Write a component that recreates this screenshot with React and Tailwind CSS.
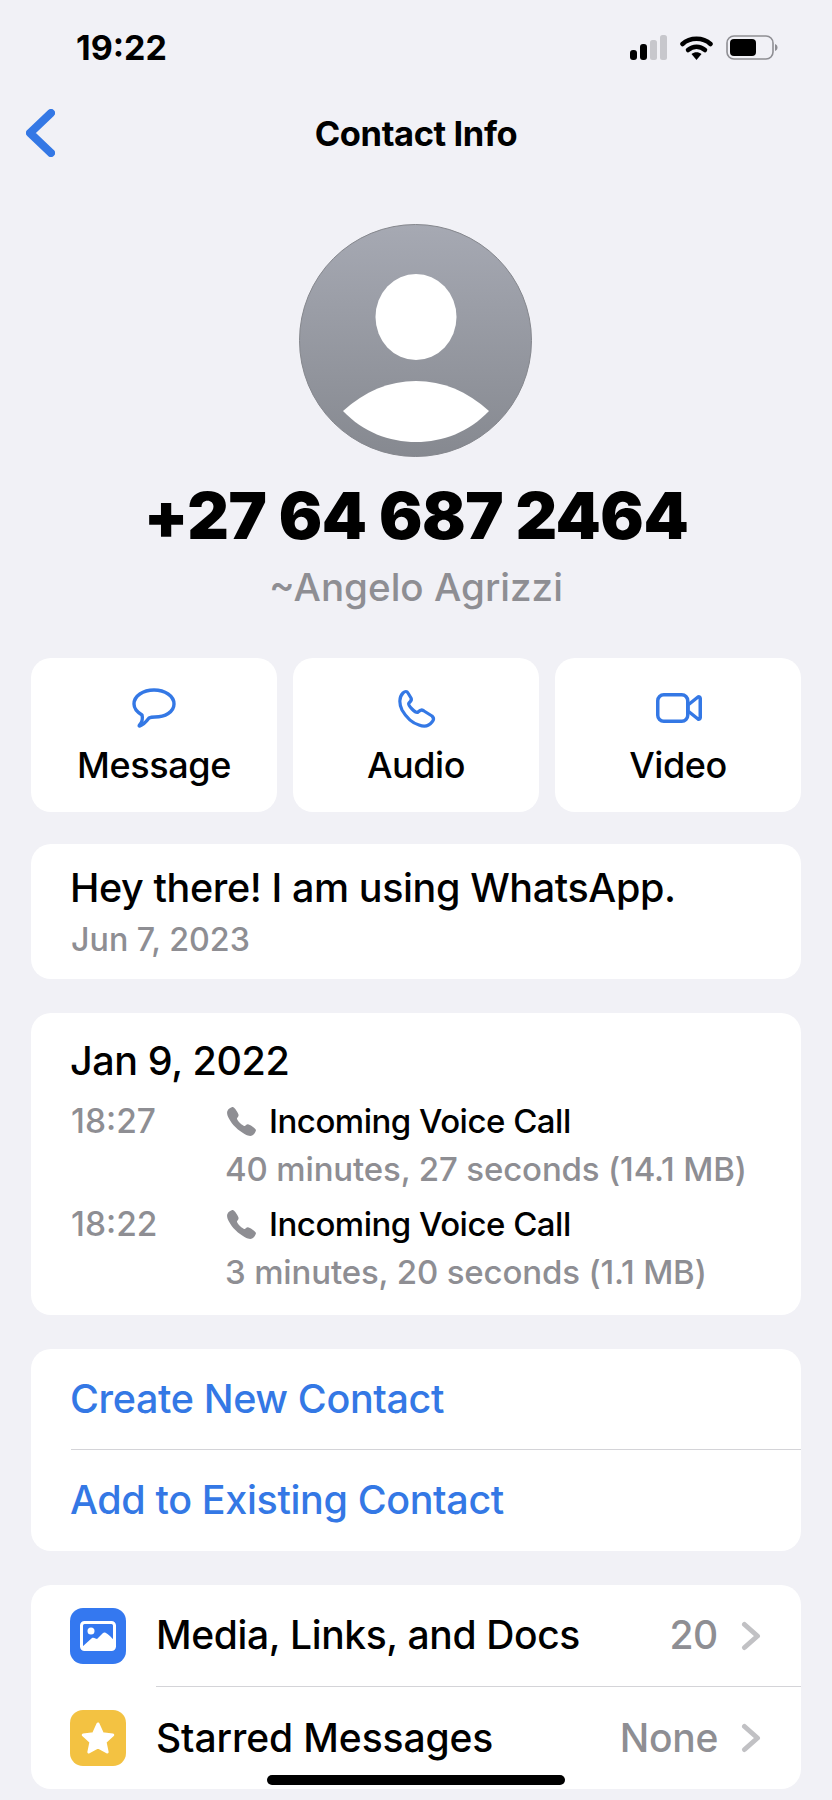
import { IoCall } from "react-icons/io5";

function Chevron() {
    return (
        <svg width="20" height="30" viewBox="0 0 20 30" fill="none" stroke="#c1c1c4" strokeWidth="5" strokeLinecap="round" strokeLinejoin="round">
            <path d="M3.5 3.5 L16.5 15 L3.5 26.5" />
        </svg>
    );
}

function StatusBar() {
    return (
        <div className="h-[94px] flex items-center justify-between pl-[76px] pr-[54px]">
            <span className="text-[34px] font-bold text-black">19:22</span>
            <div className="flex items-center gap-[13px]">
                <svg width="37" height="25" viewBox="0 0 37 25">
                    <rect x="0" y="15" width="7" height="10" rx="3" fill="#000" />
                    <rect x="10" y="9" width="7" height="16" rx="3" fill="#000" />
                    <rect x="20" y="5" width="7" height="20" rx="2.5" fill="#c7c7cc" />
                    <rect x="30" y="0" width="7" height="25" rx="2.5" fill="#c7c7cc" />
                </svg>
                <svg width="33" height="25" viewBox="0 0 33 25">
                    <path d="M2.5 9 C10 2 23 2 30.5 9" fill="none" stroke="#000" strokeWidth="4.5" strokeLinecap="round" />
                    <path d="M8 15 C13 10.5 20 10.5 25 15" fill="none" stroke="#000" strokeWidth="4.5" strokeLinecap="round" />
                    <path d="M11.5 19 C14.5 16.5 18.5 16.5 21.5 19 L16.5 25 Z" fill="#000" />
                </svg>
                <svg width="52" height="25" viewBox="0 0 52 25">
                    <rect x="1" y="1" width="46" height="23" rx="7" fill="none" stroke="#8e8e93" strokeWidth="1.6" />
                    <rect x="4" y="4" width="26" height="17" rx="4" fill="#000" />
                    <path d="M49 9 C51 10 51.5 11 51.5 12.5 C51.5 14 51 15 49 16 Z" fill="#8e8e93" />
                </svg>
            </div>
        </div>
    );
}

function ActionButton({ icon, label }) {
    return (
        <div className="flex-1 h-[154px] bg-white rounded-[20px] flex flex-col items-center">
            <div className="h-[44px] mt-[28px] flex items-center justify-center text-[#3478e5]">{icon}</div>
            <span className="mt-[15px] text-[36px] leading-[40px] font-medium text-black tracking-[-0.4px]">{label}</span>
        </div>
    );
}

function CallRow({ time, duration, className }) {
    return (
        <div className={`flex ${className || ""}`}>
            <span className="w-[154px] text-[33.5px] leading-[40px] text-[#8e8e93] font-[450]">{time}</span>
            <div>
                <div className="flex items-center h-[40px]">
                    <IoCall size={33} className="text-[#8e8e93] mr-[11px]" />
                    <span className="text-[33px] font-medium leading-[40px] text-black tracking-[-0.5px] whitespace-nowrap">Incoming Voice Call</span>
                </div>
                <div className="mt-[8px] text-[33px] leading-[40px] text-[#8e8e93] font-[450] tracking-[-0.15px] whitespace-nowrap">{duration}</div>
            </div>
        </div>
    );
}

function App() {
    return (
        <div
            className="relative w-[832px] h-[1800px] overflow-hidden bg-[#f1f1f6]"
            style={{ fontFamily: "Inter, 'Liberation Sans', sans-serif" }}
        >
            <StatusBar />

            <div className="relative h-[80px] flex items-center justify-center">
                <svg width="29" height="48" viewBox="0 0 29 48" fill="none" stroke="#3478e5" strokeWidth="8" strokeLinecap="round" strokeLinejoin="round" className="absolute left-[26px] top-[15px]">
                    <path d="M25 4 L4 24 L25 44" />
                </svg>
                <span className="text-[34.5px] font-bold tracking-[-0.4px] text-black">Contact Info</span>
            </div>

            <div className="flex flex-col items-center">
                <svg width="233" height="233" viewBox="0 0 233 233" className="mt-[50px] ml-[-1px]">
                    <defs>
                        <linearGradient id="avatarFill" x1="0" y1="0" x2="0" y2="1">
                            <stop offset="0" stopColor="#a6a9b3" />
                            <stop offset="1" stopColor="#868990" />
                        </linearGradient>
                    </defs>
                    <circle cx="116.5" cy="116.5" r="116" fill="url(#avatarFill)" stroke="#85878d" strokeWidth="1" />
                    <ellipse cx="117" cy="93" rx="40.5" ry="43" fill="#fff" />
                    <path d="M44 187 C66 167 90 157 117 157 C144 157 168 167 190 187 C170 208 144 218 117 218 C90 218 64 208 44 187 Z" fill="#fff" />
                </svg>
                <div className="mt-[23px] text-[64.5px] leading-[72px] font-black text-black tracking-[-0.5px] whitespace-nowrap">+27 64 687 2464</div>
                <div className="mt-[12px] text-[38.6px] leading-[46px] font-[450] text-[#8e8e93]">~Angelo Agrizzi</div>
            </div>

            <div className="flex flex-col px-[31px] mt-[48px]">
                <div className="flex gap-[16px]">
                    <ActionButton
                        label="Message"
                        icon={
                            <svg width="48" height="44" viewBox="6 6 48 44" fill="none" stroke="currentColor" strokeWidth="3.4" strokeLinejoin="round">
                                <path d="M30 10 C41 10 50 16 50 24 C50 32 41 37 31 37 C29 37 27 37 25 38 C22 42 19 45 15.5 46 C15 46 15 45.5 16 44.5 C18 42 19 39 18 35 C13 32 10 28 10 24 C10 16 19 10 30 10 Z" />
                            </svg>
                        }
                    />
                    <ActionButton
                        label="Audio"
                        icon={
                            <svg width="48" height="44" viewBox="6 6 48 44" fill="none" stroke="currentColor" strokeWidth="3.2" strokeLinejoin="round" className="-ml-[1px]">
                                <path d="M17 13 C19 11 21 11 22 13 L25 18 C26 20 25 21 23 23 C22 24 23 26 26 29 C29 32 31 33 32 32 C34 30 36 29 38 31 L46 36 C48 38 48 40 46 42 C43 46 38 47 33 45 C26 43 20 37 16 30 C13 24 13 17 17 13 Z" />
                            </svg>
                        }
                    />
                    <ActionButton
                        label="Video"
                        icon={
                            <svg width="46" height="30" viewBox="0 0 46 30" fill="none" stroke="currentColor" strokeWidth="3.5" strokeLinejoin="round" className="ml-[1px]">
                                <rect x="1.75" y="1.75" width="30" height="26.5" rx="6" />
                                <path d="M32 12 L42 4 C43 3.4 44.25 4 44.25 5.5 L44.25 24.5 C44.25 26 43 26.6 42 26 L32 18 Z" />
                            </svg>
                        }
                    />
                </div>

                <div className="mt-[32px] h-[135px] bg-white rounded-[20px] pl-[39px] pt-[21px]">
                    <div className="text-[39.5px] leading-[46px] font-medium text-black tracking-[-0.4px] whitespace-nowrap">Hey there! I am using WhatsApp.</div>
                    <div className="mt-[9px] ml-[1px] text-[32.2px] leading-[40px] font-[450] text-[#8e8e93]">Jun 7, 2023</div>
                </div>

                <div className="mt-[34px] h-[302px] bg-white rounded-[20px] pl-[40px] pt-[25px]">
                    <div className="-ml-[1px] text-[39.5px] leading-[46px] font-medium text-black tracking-[-0.4px]">Jan 9, 2022</div>
                    <CallRow className="mt-[17px]" time="18:27" duration="40 minutes, 27 seconds (14.1 MB)" />
                    <CallRow className="mt-[15px]" time="18:22" duration="3 minutes, 20 seconds (1.1 MB)" />
                </div>

                <div className="mt-[34px] h-[202px] bg-white rounded-[20px] pl-[40px] text-[#3478e5] text-[39.5px] font-medium tracking-[-0.38px]">
                    <div className="h-[101px] pt-[2px] flex items-center border-b border-[#d4d4d8]"><span className="-ml-[1px]">Create New Contact</span></div>
                    <div className="h-[101px] pt-[1px] flex items-center"><span className="-ml-[1px]">Add to Existing Contact</span></div>
                </div>

                <div className="mt-[34px] h-[204px] bg-white rounded-[20px] pl-[39px] text-[39px] font-medium tracking-[-0.3px] text-black">
                    <div className="h-[102px] flex items-center">
                        <div className="w-[56px] h-[56px] rounded-[13px] bg-[#3478f0] flex items-center justify-center">
                            <svg width="36" height="30" viewBox="0 0 36 30">
                                <rect x="1.5" y="1.5" width="33" height="27" rx="3" fill="none" stroke="#fff" strokeWidth="3" />
                                <circle cx="11" cy="10" r="3.5" fill="#fff" />
                                <path d="M2 26 L12 17 C14 16 16 18 17 18 L23 12 C25 10.5 27 12 34 19 L34 28 L2 28 Z" fill="#fff" />
                            </svg>
                        </div>
                        <div className="flex-1 self-stretch ml-[30px] pr-[40px] flex items-center justify-between border-b border-[#d4d4d8]">
                            <span className="tracking-[-0.35px]">Media, Links, and Docs</span>
                            <div className="flex items-center gap-[23px] text-[#8e8e93]">
                                <span>20</span>
                                <Chevron />
                            </div>
                        </div>
                    </div>
                    <div className="h-[102px] flex items-center">
                        <div className="w-[56px] h-[56px] rounded-[13px] bg-[#f3c242] flex items-center justify-center">
                            <svg width="36" height="34" viewBox="0 0 24 23" fill="#fff" stroke="#fff" strokeWidth="2" strokeLinejoin="round">
                                <path d="M12 2 L15 8.6 L22 9.4 L16.8 14.2 L18.2 21 L12 17.6 L5.8 21 L7.2 14.2 L2 9.4 L9 8.6 Z" />
                            </svg>
                        </div>
                        <div className="flex-1 ml-[30px] pr-[40px] flex items-center justify-between">
                            <span className="tracking-[-0.1px]">Starred Messages</span>
                            <div className="flex items-center gap-[23px] text-[#8e8e93]">
                                <span>None</span>
                                <Chevron />
                            </div>
                        </div>
                    </div>
                </div>
            </div>

            <div className="absolute left-[267px] top-[1775px] w-[298px] h-[10px] rounded-full bg-black" />
        </div>
    );
}

export default App;
